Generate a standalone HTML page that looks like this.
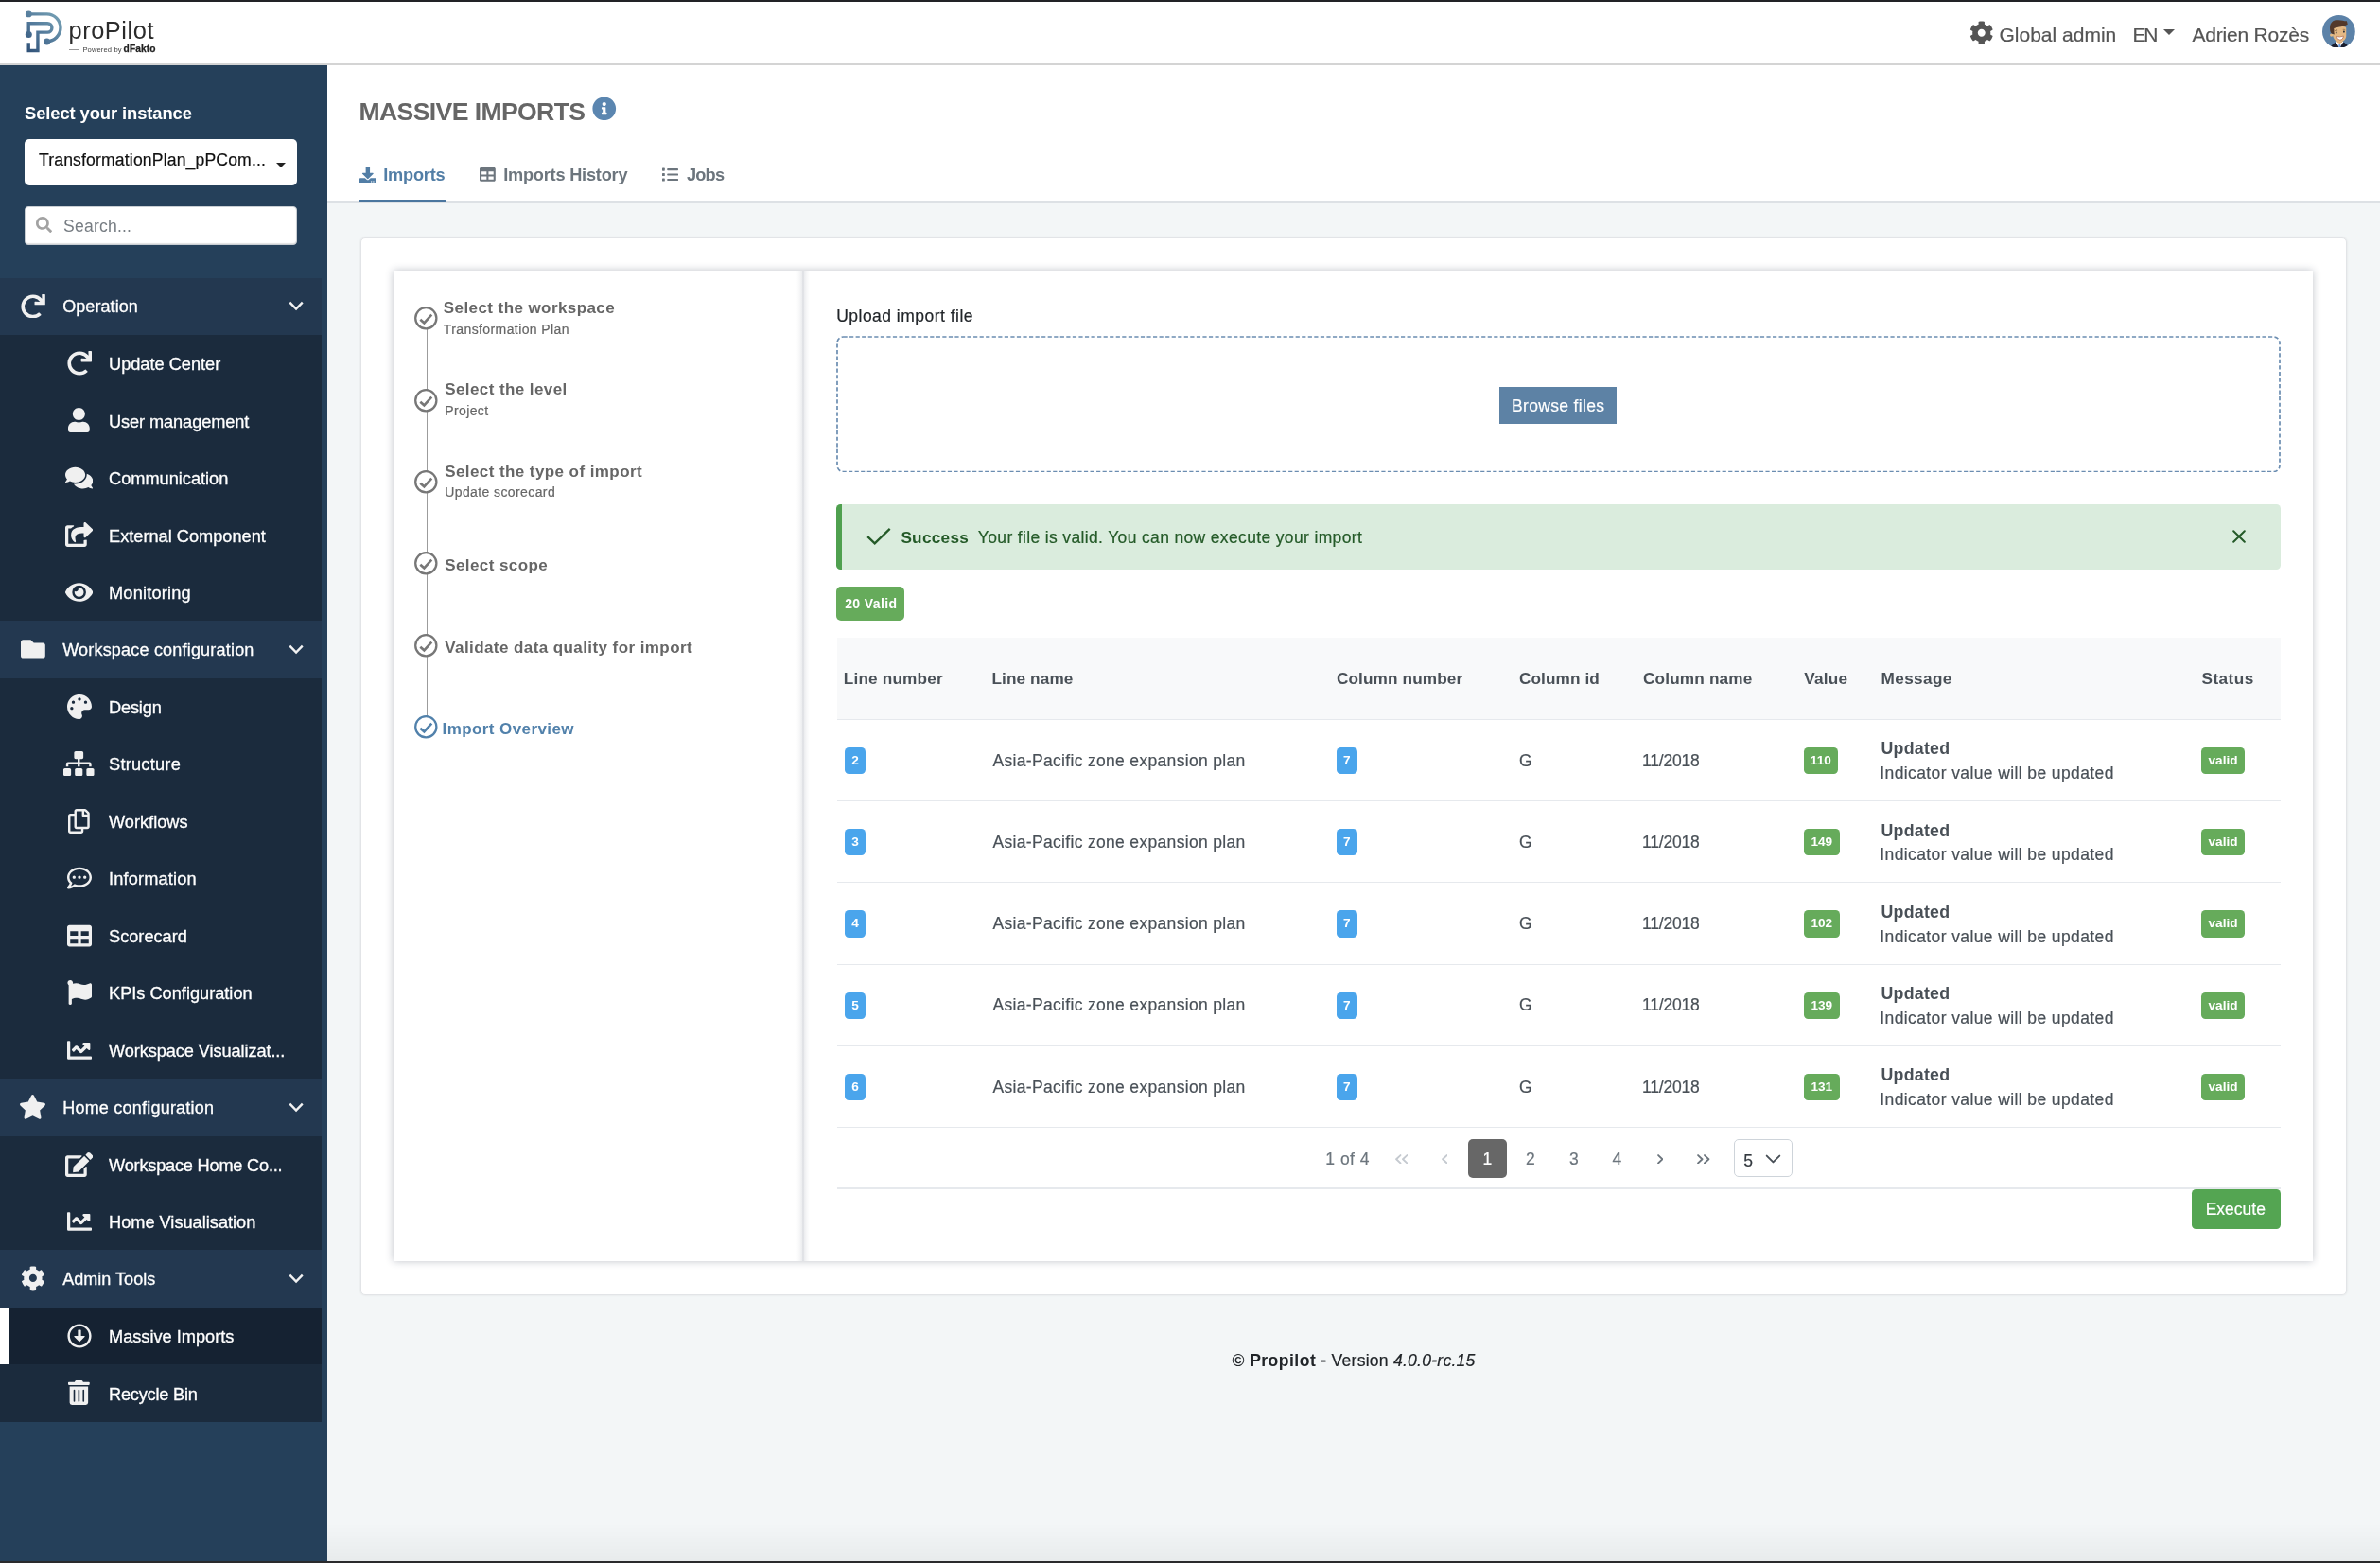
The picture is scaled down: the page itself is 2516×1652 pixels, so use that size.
<!DOCTYPE html>
<html lang="en">
<head>
<meta charset="utf-8">
<title>proPilot - Massive Imports</title>
<style>
*{box-sizing:border-box;margin:0;padding:0}
html,body{width:2516px;height:1652px;overflow:hidden}
body{position:relative;background:#f3f6f7;font-family:"Liberation Sans",sans-serif;color:#495057;font-size:18px}
svg{display:block}
#wrap{position:absolute;left:0;top:0;width:2516px;height:1652px;will-change:transform}
.abs{position:absolute}
.t{position:absolute;white-space:nowrap;line-height:1}
/* top */
#topbar{position:absolute;left:0;top:0;width:2516px;height:2px;background:#222326}
#header{position:absolute;left:0;top:2px;width:2516px;height:67px;background:#fff;border-bottom:2px solid #d4d4d4}

/* header content */
#logo{position:absolute;left:20px;top:4px;width:60px;height:60px}
#brand{position:absolute;left:72.5px;top:20px;font-size:25.4px;line-height:1;color:#2b2b2b;letter-spacing:.55px;white-space:nowrap}
#pwline{position:absolute;left:73px;top:51.8px;width:10px;height:1px;background:#999}
#pw{position:absolute;left:87.4px;top:48.7px;font-size:7.6px;line-height:1;color:#444;white-space:nowrap;letter-spacing:.12px}
#df{position:absolute;left:130.6px;top:47.2px;-webkit-text-stroke:.25px #222;font-size:10.2px;line-height:1;color:#222;font-weight:700;white-space:nowrap;letter-spacing:.1px}
.hr{position:absolute;top:25.7px;font-size:21px;line-height:1;color:#555;white-space:nowrap}
#gear{position:absolute;left:2082px;top:22px;width:25.5px;height:25.5px}
#gear svg{width:100%;height:100%;fill:#555}
#encaret{position:absolute;left:2286.5px;top:31px;width:0;height:0;border-left:6.5px solid transparent;border-right:6.5px solid transparent;border-top:6.5px solid #555}
#avatar{position:absolute;left:2455px;top:15.5px;width:34.8px;height:34.8px}
/* sidebar */
#sidebar{position:absolute;left:0;top:69px;width:346px;height:1583px;background:#25405a}
#nav{position:absolute;left:0;top:224.5px;width:340px}
.grp{position:relative;height:60.48px;background:#233850}
.itm{position:relative;height:60.48px;background:#1b2b3d}
.itm.act{background:#152232}
.itm.act:before{content:"";position:absolute;left:0;top:0;width:9px;height:100%;background:#fff}
.grp .lbl{-webkit-text-stroke:.3px #fff;position:absolute;left:66.2px;top:21.9px;font-size:18px;line-height:1;color:#fff;white-space:nowrap;letter-spacing:.07px}
.itm .lbl{-webkit-text-stroke:.3px #fff;position:absolute;left:115px;top:22.2px;font-size:18.2px;line-height:1;color:#fff;white-space:nowrap}
.grp .ic{position:absolute;left:14.9px;top:17px;width:40px;height:25.8px;display:flex;justify-content:center}
.itm .ic{position:absolute;left:63.7px;top:17px;width:40px;height:26px;display:flex;justify-content:center}
.grp .chev{position:absolute;left:304.5px;top:24.5px;width:16px;height:12px}
.ic svg{height:100%;width:auto;fill:#f0f0f0}
.chev svg{width:100%;height:100%}
#selinst{position:absolute;left:26px;top:41.5px;font-size:18.4px;font-weight:700;color:#fff;line-height:1;white-space:nowrap;letter-spacing:-.1px}
#dd{position:absolute;left:26px;top:78px;width:288px;height:48.500px;background:#fff;border-radius:5px}
#dd .tx{position:absolute;left:15px;top:13.700px;font-size:17.6px;line-height:1;color:#111;white-space:nowrap;letter-spacing:.15px}
#dd .car{position:absolute;left:265.500px;top:25px;width:0;height:0;border-left:5.500px solid transparent;border-right:5.500px solid transparent;border-top:5.500px solid #222}
#srch{position:absolute;left:26px;top:149px;width:288px;height:41px;background:#fff;border-radius:4px;border:1px solid #c9ced3;box-shadow:inset 0 -1px 1px rgba(0,0,0,.12)}
#srch .tx{position:absolute;left:40px;top:11.500px;font-size:17.6px;line-height:1;color:#777d83;white-space:nowrap;letter-spacing:.2px}
#srch svg{position:absolute;left:10.500px;top:9.700px;width:17px;height:17px;fill:#a2a2a2}
/* main */
#whitehead{position:absolute;left:346px;top:69px;width:2170px;height:143px;background:#fff}
#tabline{position:absolute;left:346px;top:212.100px;width:2170px;height:2.700px;background:#dde1e5}
#tabactive{position:absolute;left:380.200px;top:211px;width:91.800px;height:2.600px;background:#4b769f}
#card1{position:absolute;left:380.600px;top:250.700px;width:2100px;height:1118px;background:#fff;border:1px solid #e2e4e7;border-radius:5px;box-shadow:0 0 2.500px rgba(0,0,0,.09)}
#card2{position:absolute;left:415.600px;top:285.900px;width:2029.500px;height:1047.100px;background:#fff;box-shadow:0 0 8px rgba(45,55,80,.3)}
#steps{position:absolute;left:842.300px;top:285.900px;width:14px;height:1047.100px;background:linear-gradient(to right,rgba(55,65,90,0),rgba(55,65,90,.04) 22%,rgba(55,65,90,.09) 40%,rgba(55,65,90,.11) 46.300%,rgba(55,65,90,.27) 46.800%,rgba(55,65,90,.27) 53.200%,rgba(55,65,90,.11) 53.700%,rgba(55,65,90,.09) 60%,rgba(55,65,90,.04) 78%,rgba(55,65,90,0))}

#title{position:absolute;left:379.5px;top:104.700px;font-size:26.600px;font-weight:700;color:#666;line-height:1;white-space:nowrap;letter-spacing:-.62px}
#info{position:absolute;left:626px;top:101.500px;width:25.500px;height:25.500px}
#info svg{width:100%;height:100%;fill:#5b86b0}
.tab{position:absolute;top:176px;font-size:18.200px;font-weight:700;line-height:1;white-space:nowrap;color:#6c757d}
.tabic{position:absolute}
.tabic svg{width:100%;height:100%}
/* stepper */
.stc{position:absolute;left:438.200px;width:24.600px;height:24.600px}
.stt{position:absolute;font-size:17px;font-weight:700;color:#666;line-height:1;white-space:nowrap;letter-spacing:.42px}
.sts{position:absolute;font-size:14px;color:#666;line-height:1;white-space:nowrap;letter-spacing:.4px}
#stline{position:absolute;left:450.600px;top:348px;width:1.600px;height:409px;background:#9c9c9c}
/* right pane */
#upl{position:absolute;left:884.2px;top:325.5px;font-size:17.5px;color:#212529;line-height:1;white-space:nowrap;letter-spacing:.48px}
#drop{position:absolute;left:884px;top:354.8px;width:1527px;height:144.5px}
#browse{position:absolute;left:1585.3px;top:408.9px;width:123.7px;height:38.7px;background:#5d82a5}
#alert{position:absolute;left:884px;top:533.2px;width:1526.6px;height:69.3px;background:#daecdd;border-left:6px solid #4fa04f;border-radius:4.5px}
#alert .ck{position:absolute;left:25.3px;top:24.3px;width:28px;height:20px}
#alert .b{position:absolute;left:62.4px;top:26.9px;font-size:17.2px;font-weight:700;color:#245a28;line-height:1;letter-spacing:.27px}
#alert .m{position:absolute;left:143.8px;top:26.6px;font-size:17.5px;color:#245a28;line-height:1;white-space:nowrap;letter-spacing:.35px}
#alert .x{position:absolute;left:1470.200px;top:27.200px;width:14px;height:14px}
.bdg{position:absolute;border-radius:4px;color:#fff;font-weight:700;font-size:13.200px;text-align:center;line-height:1}
#valid20{left:884px;top:619.8px;width:72.2px;height:36.7px;background:#66ab5b;border-radius:5px}
#thead{position:absolute;left:884.5px;top:674.3px;width:1526px;height:86.4px;background:#f8f9fa;border-bottom:1.8px solid #e6e9ed}
.th{position:absolute;top:708.7px;font-size:17.2px;font-weight:700;color:#495057;line-height:1;white-space:nowrap}
.row{position:absolute;left:884.5px;width:1526px;height:86.4px;border-bottom:1.8px solid #e6e9ed}
.row .c{position:absolute;top:34.9px;font-size:17.5px;color:#495057;line-height:1;white-space:nowrap}
.row .bb{position:absolute;top:29.1px;height:28.2px;border-radius:4.5px;color:#fff;font-weight:700;font-size:13.6px;line-height:28.4px;text-align:center}
.blue{background:#4aa5ec}.green{background:#66ab5b}

#pagline{position:absolute;left:884.500px;top:1255.200px;width:1526px;height:1.800px;background:#e6e9ed}
.pg{position:absolute;top:1216.6px;font-size:17.5px;line-height:1;color:#6c757d;white-space:nowrap}
#pg1{position:absolute;left:1552.100px;top:1203.500px;width:40.700px;height:41.100px;background:#676767;border-radius:5px}
.pgi{position:absolute;top:1219.5px;height:10.5px}
#pgsel{position:absolute;left:1832.900px;top:1204.200px;width:61.800px;height:39.800px;border:1.300px solid #ced4da;border-radius:5px;background:#fff}
#pgsel span{position:absolute;left:9.300px;top:13.8px;font-size:17.500px;line-height:1;color:#343a40}
#pgsel svg{position:absolute;left:31.800px;top:14.600px;width:17px;height:10.500px}
#exec{position:absolute;left:2316.900px;top:1256.900px;width:94px;height:41.900px;background:#54a552;border-radius:4.500px}
#foot{position:absolute;left:346px;width:2170px;top:1430.300px;text-align:center;font-size:17.600px;line-height:1;color:#212529;white-space:nowrap;letter-spacing:.23px}
#botline{position:absolute;left:0;top:1650px;width:2516px;height:2px;background:#2a2a2c}
#botshade{position:absolute;left:346px;top:1610px;width:2170px;height:40px;background:linear-gradient(to bottom,rgba(0,0,0,0),rgba(0,0,0,.045))}

.row .c,#upl,#alert .m,.pg,.hr,#dd .tx,.sts,#foot,#browse .t,#exec .t,#pg1 .t,#pgsel span{-webkit-text-stroke-width:.2px}
.row .c[style*="font-weight:700"],#foot b{-webkit-text-stroke-width:0}
</style>
</head>
<body>
<div id="wrap">
<div id="topbar"></div>
<div id="header"></div>
<svg id="logo" viewBox="0 0 60 60">
<defs><linearGradient id="lg" gradientUnits="userSpaceOnUse" x1="8" y1="54" x2="46" y2="14"><stop offset="0" stop-color="#2b4c73"/><stop offset=".5" stop-color="#52799a"/><stop offset="1" stop-color="#76a1b5"/></linearGradient></defs>
<g fill="none" stroke="url(#lg)" stroke-width="3.4">
<path d="M10.3 10.9H29.5A14.4 14.4 0 0 1 29.6 39.8"/>
<path d="M10.2 32.6V20.7H30.2A4.7 4.7 0 0 1 30.2 30.1H19.95V49.5H10.2V41.3"/>
</g>
<g fill="url(#lg)"><circle cx="10.3" cy="10.9" r="3.4"/><circle cx="10.3" cy="32.6" r="3.5"/><circle cx="29.6" cy="39.9" r="3.5"/></g>
</svg>
<div id="brand">proPilot</div>
<div id="pwline"></div><div id="pw">Powered by</div><div id="df">dFakto</div>
<div id="gear"><svg viewBox="0 0 512 512"><path d="M487.4 315.7l-42.6-24.6c4.3-23.2 4.3-47 0-70.2l42.6-24.6c4.9-2.8 7.1-8.6 5.5-14-11.1-35.6-30-67.8-54.7-94.6-3.8-4.1-10-5.1-14.8-2.3L380.8 110c-17.9-15.400-38.500-27.300-60.800-35.100V25.800c0-5.600-3.900-10.500-9.400-11.700-36.700-8.200-74.300-7.800-109.200 0-5.500 1.200-9.400 6.100-9.400 11.700V75c-22.200 7.900-42.800 19.800-60.800 35.100L88.700 85.500c-4.900-2.800-11-1.900-14.800 2.300-24.700 26.700-43.600 58.900-54.700 94.600-1.700 5.400.6 11.200 5.500 14L67.300 221c-4.300 23.200-4.300 47 0 70.200l-42.600 24.600c-4.900 2.800-7.100 8.600-5.500 14 11.100 35.600 30 67.800 54.700 94.600 3.800 4.100 10 5.100 14.800 2.300l42.600-24.600c17.900 15.400 38.500 27.300 60.800 35.100v49.200c0 5.600 3.900 10.500 9.400 11.700 36.700 8.200 74.300 7.800 109.200 0 5.500-1.200 9.400-6.100 9.400-11.700v-49.200c22.200-7.900 42.800-19.800 60.800-35.100l42.600 24.600c4.900 2.800 11 1.900 14.800-2.300 24.700-26.700 43.600-58.900 54.700-94.600 1.500-5.500-.7-11.300-5.600-14.100zM256 336c-44.100 0-80-35.900-80-80s35.900-80 80-80 80 35.900 80 80-35.900 80-80 80z"/></svg></div>
<div class="hr" style="left:2113.5px">Global admin</div>
<div class="hr" style="left:2254.5px;letter-spacing:-2.2px">EN</div>
<div id="encaret"></div>
<div class="hr" style="left:2317.5px;letter-spacing:-.22px">Adrien Rozès</div>
<svg id="avatar" viewBox="0 0 104 104">
<defs><clipPath id="avc"><circle cx="52" cy="52" r="52"/></clipPath></defs>
<circle cx="52" cy="52" r="52" fill="#5c82a8"/>
<g clip-path="url(#avc)">
<path d="M28 97L41 86L54 89L68 85L79 95L84 110H24Z" fill="#1b1e2d"/>
<path d="M41.500 84L54.500 104L67 84Z" fill="#fff"/>
<path d="M52 93H57.500L58 106H51.500Z" fill="#6a9de0"/>
<path d="M47 76H63V86L55 90L47 86Z" fill="#dca874"/>
<circle cx="29" cy="63" r="5" fill="#e3b782"/>
<path d="M33 42C33 36 74 32 75.500 40V66C75 78 63 86 55 86C45 86 35 76 33.500 64Z" fill="#e4b884"/>
<path d="M24 40C24 22 36 14.500 48 15.500C58 14.500 70 19 77.500 18.500L80 29.500C70 36 50 38 36.500 42C38 48 36 54 38.500 61L31 59C26 56 24 50 24 40Z" fill="#53382a"/>
<ellipse cx="44" cy="55.500" rx="2.600" ry="3.300" fill="#15202e"/>
<ellipse cx="68.500" cy="52.500" rx="2.600" ry="3.300" fill="#15202e"/>
<path d="M40 49.500Q44 46.500 48 48" stroke="#3a2519" stroke-width="1.800" fill="none"/>
<path d="M65 46Q69 44.500 72.500 47" stroke="#7a5a3a" stroke-width="1.800" fill="none"/>
<path d="M44.500 67.500Q55 71 67 66Q65 78 56 78Q48 78 44.500 67.500Z" fill="#fff" stroke="#9c4a34" stroke-width="1.600"/>
</g>
</svg>
<div id="sidebar">
<div id="selinst">Select your instance</div>
<div id="dd"><span class="tx">TransformationPlan_pPCom...</span><span class="car"></span></div>
<div id="srch"><svg viewBox="0 0 512 512"><path d="M505 442.700L405.300 343c-4.500-4.500-10.600-7-17-7H372c27.600-35.300 44-79.700 44-128C416 93.100 322.900 0 208 0S0 93.100 0 208s93.100 208 208 208c48.300 0 92.700-16.400 128-44v16.300c0 6.400 2.500 12.500 7 17l99.700 99.700c9.400 9.400 24.600 9.400 33.900 0l28.300-28.300c9.400-9.400 9.400-24.600.100-34zM208 336c-70.700 0-128-57.200-128-128 0-70.700 57.200-128 128-128 70.700 0 128 57.200 128 128 0 70.700-57.200 128-128 128z"/></svg><span class="tx">Search...</span></div>
<div id="nav">
<div class="grp"><span class="ic"><svg viewBox="0 0 512 512"><path d="M500.33 0h-47.41a12 12 0 0 0-12 12.57l4 82.76A247.42 247.42 0 0 0 256 8C119.34 8 7.9 119.53 8 256.19 8.1 393.07 119.1 504 256 504a247.1 247.1 0 0 0 166.18-63.91 12 12 0 0 0 .48-17.43l-34-34a12 12 0 0 0-16.38-.55A176 176 0 1 1 402.1 157.8l-101.53-4.87a12 12 0 0 0-12.57 12v47.41a12 12 0 0 0 12 12h200.33a12 12 0 0 0 12-12V12a12 12 0 0 0-12-12z"/></svg></span><span class="lbl">Operation</span><span class="chev"><svg viewBox="0 0 16 12"><path d="M1.350 1.550L8.050 8.600L14.750 1.550" fill="none" stroke="#f2f2f2" stroke-width="2.400"/></svg></span></div>
<div class="itm"><span class="ic"><svg viewBox="0 0 512 512"><path d="M500.33 0h-47.41a12 12 0 0 0-12 12.57l4 82.76A247.42 247.42 0 0 0 256 8C119.34 8 7.9 119.53 8 256.19 8.1 393.07 119.1 504 256 504a247.1 247.1 0 0 0 166.18-63.91 12 12 0 0 0 .48-17.43l-34-34a12 12 0 0 0-16.38-.55A176 176 0 1 1 402.1 157.8l-101.53-4.87a12 12 0 0 0-12.57 12v47.41a12 12 0 0 0 12 12h200.33a12 12 0 0 0 12-12V12a12 12 0 0 0-12-12z"/></svg></span><span class="lbl">Update Center</span></div>
<div class="itm"><span class="ic"><svg viewBox="0 0 448 512"><path d="M224 256c70.7 0 128-57.3 128-128S294.7 0 224 0 96 57.3 96 128s57.3 128 128 128zm89.6 32h-16.7c-22.2 10.2-46.9 16-72.9 16s-50.6-5.8-72.9-16h-16.7C60.2 288 0 348.2 0 422.4V464c0 26.5 21.5 48 48 48h352c26.5 0 48-21.5 48-48v-41.6c0-74.2-60.2-134.4-134.4-134.4z"/></svg></span><span class="lbl" style="letter-spacing:-0.09px">User management</span></div>
<div class="itm"><span class="ic"><svg viewBox="0 0 576 512"><path d="M416 192c0-88.4-93.1-160-208-160S0 103.6 0 192c0 34.3 14.1 65.9 38 92-13.4 30.2-35.5 54.2-35.8 54.5-2.2 2.3-2.8 5.7-1.5 8.700S4.800 352 8 352c36.600 0 66.900-12.300 88.700-25 32.200 15.700 70.300 25 111.300 25 114.900 0 208-71.600 208-160zm122 220c23.900-26 38-57.700 38-92 0-66.900-53.500-124.200-129.300-148.100.900 6.600 1.300 13.300 1.300 20.100 0 105.900-107.700 192-240 192-10.800 0-21.300-.800-31.700-1.900C207.800 439.600 281.800 480 368 480c41 0 79.100-9.200 111.300-25 21.800 12.700 52.100 25 88.700 25 3.200 0 6.100-1.900 7.300-4.800 1.300-2.900.700-6.300-1.500-8.700-.300-.300-22.400-24.200-35.800-54.500z"/></svg></span><span class="lbl">Communication</span></div>
<div class="itm"><span class="ic"><svg viewBox="0 0 576 512"><path d="M568.482 177.448L424.479 313.433C409.3 327.768 384 317.14 384 295.985v-71.963c-144.575.97-205.566 35.113-164.775 171.353 4.483 14.973-12.846 26.567-25.006 17.33C155.252 383.105 120 326.488 120 269.339c0-143.937 117.599-172.5 264-173.312V24.012c0-21.174 25.317-31.768 40.479-17.448l144.003 135.988c10.02 9.463 10.028 25.425 0 34.896zM384 379.128V448H64V128h50.916a11.990 11.990 0 0 0 8.648-3.693c14.953-15.568 32.237-27.890 51.014-37.676C185.708 80.830 181.584 64 169.033 64H48C21.490 64 0 85.490 0 112v352c0 26.510 21.490 48 48 48h352c26.510 0 48-21.490 48-48v-88.806c0-8.288-8.197-14.066-16.011-11.302a71.830 71.830 0 0 1-34.189 3.377c-7.270-1.046-13.800 4.514-13.800 11.859z"/></svg></span><span class="lbl">External Component</span></div>
<div class="itm"><span class="ic"><svg viewBox="0 0 576 512"><path d="M572.52 241.4C518.29 135.59 410.93 64 288 64S57.68 135.64 3.48 241.41a32.35 32.35 0 0 0 0 29.19C57.71 376.41 165.07 448 288 448s230.32-71.64 284.52-177.41a32.35 32.35 0 0 0 0-29.19zM288 400a144 144 0 1 1 144-144 143.93 143.93 0 0 1-144 144zm0-240a95.31 95.31 0 0 0-25.31 3.79 47.85 47.85 0 0 1-66.9 66.9A95.78 95.78 0 1 0 288 160z"/></svg></span><span class="lbl" style="letter-spacing:0.2px">Monitoring</span></div>
<div class="grp"><span class="ic"><svg viewBox="0 0 512 512"><path d="M464 128H272l-64-64H48C21.49 64 0 85.49 0 112v288c0 26.51 21.49 48 48 48h416c26.51 0 48-21.49 48-48V176c0-26.51-21.49-48-48-48z"/></svg></span><span class="lbl" style="letter-spacing:.2px">Workspace configuration</span><span class="chev"><svg viewBox="0 0 16 12"><path d="M1.350 1.550L8.050 8.600L14.750 1.550" fill="none" stroke="#f2f2f2" stroke-width="2.400"/></svg></span></div>
<div class="itm"><span class="ic"><svg viewBox="0 0 512 512"><path d="M204.3 5C104.9 24.4 24.8 104.3 5.2 203.4c-37 187 131.7 326.4 258.8 306.7 41.2-6.4 61.4-54.6 42.5-91.7-23.1-45.4 9.9-98.4 60.9-98.4h79.7c35.8 0 64.8-29.6 64.9-65.3C511.5 97.1 368.1-26.9 204.3 5zM96 320c-17.7 0-32-14.3-32-32s14.3-32 32-32 32 14.3 32 32-14.3 32-32 32zm32-128c-17.7 0-32-14.3-32-32s14.3-32 32-32 32 14.3 32 32-14.3 32-32 32zm128-64c-17.7 0-32-14.3-32-32s14.3-32 32-32 32 14.3 32 32-14.3 32-32 32zm128 64c-17.7 0-32-14.3-32-32s14.3-32 32-32 32 14.3 32 32-14.3 32-32 32z"/></svg></span><span class="lbl" style="letter-spacing:-0.17px">Design</span></div>
<div class="itm"><span class="ic"><svg viewBox="0 0 640 512"><path d="M128 352H32c-17.67 0-32 14.33-32 32v96c0 17.67 14.33 32 32 32h96c17.67 0 32-14.33 32-32v-96c0-17.67-14.33-32-32-32zm-24-80h192v48h48v-48h192v48h48v-57.59c0-21.17-17.23-38.41-38.41-38.41H344v-64h40c17.67 0 32-14.33 32-32V32c0-17.67-14.33-32-32-32H256c-17.67 0-32 14.33-32 32v96c0 17.67 14.33 32 32 32h40v64H94.41C73.23 224 56 241.23 56 262.41V320h48v-48zm264 80h-96c-17.67 0-32 14.33-32 32v96c0 17.67 14.33 32 32 32h96c17.67 0 32-14.33 32-32v-96c0-17.67-14.33-32-32-32zm240 0h-96c-17.67 0-32 14.33-32 32v96c0 17.67 14.33 32 32 32h96c17.67 0 32-14.33 32-32v-96c0-17.67-14.33-32-32-32z"/></svg></span><span class="lbl" style="letter-spacing:0.25px">Structure</span></div>
<div class="itm"><span class="ic"><svg viewBox="0 0 448 512"><path d="M433.941 65.941l-51.882-51.882A48 48 0 0 0 348.118 0H176c-26.51 0-48 21.49-48 48v48H48c-26.51 0-48 21.49-48 48v320c0 26.51 21.49 48 48 48h224c26.51 0 48-21.49 48-48v-48h80c26.51 0 48-21.49 48-48V99.882a48 48 0 0 0-14.059-33.941zM266 464H54a6 6 0 0 1-6-6V150a6 6 0 0 1 6-6h74v224c0 26.51 21.49 48 48 48h96v42a6 6 0 0 1-6 6zm128-96H182a6 6 0 0 1-6-6V54a6 6 0 0 1 6-6h106v88c0 13.255 10.745 24 24 24h88v202a6 6 0 0 1-6 6zm6-256h-64V48h9.632c1.591 0 3.117.632 4.243 1.757l48.368 48.368a6 6 0 0 1 1.757 4.243V112z"/></svg></span><span class="lbl">Workflows</span></div>
<div class="itm"><span class="ic"><svg viewBox="0 0 512 512"><path d="M144 208c-17.7 0-32 14.3-32 32s14.3 32 32 32 32-14.3 32-32-14.3-32-32-32zm112 0c-17.7 0-32 14.3-32 32s14.3 32 32 32 32-14.3 32-32-14.3-32-32-32zm112 0c-17.7 0-32 14.3-32 32s14.3 32 32 32 32-14.3 32-32-14.3-32-32-32zM256 32C114.6 32 0 125.1 0 240c0 47.6 19.9 91.2 52.9 126.3C38 405.7 7 439.1 6.5 439.5c-6.6 7-8.4 17.2-4.6 26S14.4 480 24 480c61.5 0 110-25.7 139.1-46.3C192 442.8 223.2 448 256 448c141.4 0 256-93.1 256-208S397.4 32 256 32zm0 368c-26.7 0-53.1-4.1-78.4-12.1l-22.7-7.2-19.5 13.8c-14.3 10.1-33.9 21.4-57.5 29 7.3-12.1 14.4-25.7 19.9-40.2l10.6-28.1-20.6-21.8C69.7 314.1 48 282.2 48 240c0-88.2 93.3-160 208-160s208 71.8 208 160-93.300 160-208 160z"/></svg></span><span class="lbl" style="letter-spacing:0.17px">Information</span></div>
<div class="itm"><span class="ic"><svg viewBox="0 0 512 512"><path d="M464 32H48C21.49 32 0 53.49 0 80v352c0 26.51 21.49 48 48 48h416c26.51 0 48-21.49 48-48V80c0-26.51-21.49-48-48-48zM224 416H64v-96h160v96zm0-160H64v-96h160v96zm224 160H288v-96h160v96zm0-160H288v-96h160v96z"/></svg></span><span class="lbl">Scorecard</span></div>
<div class="itm"><span class="ic"><svg viewBox="0 0 512 512"><path d="M349.565 98.783C295.978 98.783 251.721 64 184.348 64c-24.955 0-47.309 4.384-68.045 12.013a55.947 55.947 0 0 0 3.586-23.562C118.117 24.015 94.806 1.206 66.338.048 34.345-1.254 8 24.296 8 56c0 19.026 9.497 35.825 24 45.945V488c0 13.255 10.745 24 24 24h16c13.255 0 24-10.745 24-24v-94.4c28.311-12.064 63.582-22.122 114.435-22.122 53.588 0 97.844 34.783 165.217 34.783 48.169 0 86.667-16.294 122.505-40.858C506.84 359.452 512 349.571 512 339.045v-243.1c0-23.393-24.269-38.87-45.485-29.016-34.338 15.948-76.454 31.854-116.95 31.854z"/></svg></span><span class="lbl">KPIs Configuration</span></div>
<div class="itm"><span class="ic"><svg viewBox="0 0 512 512"><path d="M496 384H64V80c0-8.84-7.16-16-16-16H16C7.16 64 0 71.16 0 80v336c0 17.67 14.33 32 32 32h464c8.84 0 16-7.16 16-16v-32c0-8.84-7.16-16-16-16zM464 96H345.94c-21.38 0-32.09 25.85-16.97 40.97l32.4 32.4L288 242.75l-73.37-73.37c-12.5-12.5-32.76-12.5-45.25 0l-68.69 68.69c-6.25 6.25-6.25 16.38 0 22.63l22.62 22.62c6.25 6.25 16.38 6.25 22.63 0L192 237.25l73.37 73.37c12.5 12.5 32.76 12.5 45.25 0l96-96 32.4 32.4c15.12 15.12 40.97 4.41 40.97-16.97V112c.01-8.84-7.15-16-15.99-16z"/></svg></span><span class="lbl" style="letter-spacing:-0.09px">Workspace Visualizat...</span></div>
<div class="grp"><span class="ic"><svg viewBox="0 0 576 512"><path d="M259.3 17.8L194 150.2 47.9 171.5c-26.2 3.8-36.7 36.1-17.7 54.6l105.7 103-25 145.5c-4.5 26.3 23.2 46 46.4 33.7L288 439.6l130.7 68.7c23.2 12.2 50.9-7.4 46.4-33.7l-25-145.5 105.7-103c19-18.5 8.5-50.8-17.7-54.6L382 150.2 316.7 17.8c-11.7-23.6-45.6-23.9-57.4 0z"/></svg></span><span class="lbl" style="letter-spacing:.22px">Home configuration</span><span class="chev"><svg viewBox="0 0 16 12"><path d="M1.350 1.550L8.050 8.600L14.750 1.550" fill="none" stroke="#f2f2f2" stroke-width="2.400"/></svg></span></div>
<div class="itm"><span class="ic"><svg viewBox="0 0 576 512"><path d="M402.6 83.2l90.2 90.2c3.8 3.8 3.8 10 0 13.8L274.4 405.6l-92.8 10.3c-12.4 1.4-22.9-9.1-21.5-21.5l10.3-92.8L388.8 83.2c3.8-3.8 10-3.8 13.8 0zm162-22.9l-48.8-48.8c-15.2-15.2-39.9-15.2-55.2 0l-35.4 35.4c-3.8 3.8-3.8 10 0 13.8l90.2 90.2c3.8 3.8 10 3.8 13.8 0l35.4-35.4c15.2-15.3 15.2-40 0-55.2zM384 346.2V448H64V128h229.8c3.2 0 6.2-1.3 8.5-3.5l40-40c7.6-7.6 2.2-20.5-8.5-20.5H48C21.5 64 0 85.5 0 112v352c0 26.5 21.5 48 48 48h352c26.5 0 48-21.5 48-48V306.2c0-10.7-12.9-16-20.5-8.5l-40 40c-2.200 2.300-3.500 5.300-3.500 8.500z"/></svg></span><span class="lbl" style="letter-spacing:-0.21px">Workspace Home Co...</span></div>
<div class="itm"><span class="ic"><svg viewBox="0 0 512 512"><path d="M496 384H64V80c0-8.84-7.16-16-16-16H16C7.16 64 0 71.16 0 80v336c0 17.67 14.33 32 32 32h464c8.84 0 16-7.16 16-16v-32c0-8.84-7.16-16-16-16zM464 96H345.94c-21.38 0-32.09 25.85-16.97 40.97l32.4 32.4L288 242.75l-73.37-73.37c-12.5-12.5-32.76-12.5-45.25 0l-68.69 68.69c-6.25 6.25-6.25 16.38 0 22.63l22.62 22.62c6.25 6.25 16.38 6.25 22.63 0L192 237.25l73.37 73.37c12.5 12.5 32.76 12.5 45.25 0l96-96 32.4 32.4c15.12 15.12 40.97 4.41 40.97-16.97V112c.01-8.84-7.15-16-15.99-16z"/></svg></span><span class="lbl">Home Visualisation</span></div>
<div class="grp"><span class="ic"><svg viewBox="0 0 512 512"><path d="M487.4 315.7l-42.6-24.6c4.3-23.2 4.3-47 0-70.2l42.6-24.6c4.9-2.8 7.1-8.6 5.5-14-11.1-35.6-30-67.8-54.7-94.6-3.8-4.1-10-5.1-14.8-2.3L380.8 110c-17.9-15.4-38.5-27.3-60.8-35.1V25.8c0-5.6-3.9-10.5-9.4-11.7-36.7-8.2-74.3-7.8-109.2 0-5.5 1.2-9.4 6.1-9.4 11.7V75c-22.2 7.9-42.8 19.8-60.8 35.1L88.7 85.5c-4.9-2.8-11-1.9-14.8 2.3-24.7 26.7-43.6 58.9-54.7 94.6-1.7 5.4.6 11.2 5.5 14L67.3 221c-4.3 23.2-4.3 47 0 70.2l-42.6 24.6c-4.9 2.8-7.1 8.6-5.5 14 11.1 35.6 30 67.8 54.7 94.6 3.8 4.1 10 5.1 14.8 2.3l42.6-24.6c17.9 15.4 38.5 27.3 60.8 35.1v49.2c0 5.6 3.9 10.5 9.4 11.7 36.7 8.2 74.3 7.8 109.2 0 5.5-1.2 9.4-6.1 9.4-11.7v-49.2c22.2-7.9 42.8-19.8 60.8-35.1l42.6 24.6c4.9 2.8 11 1.9 14.8-2.3 24.7-26.7 43.6-58.9 54.7-94.6 1.5-5.5-.7-11.3-5.6-14.1zM256 336c-44.1 0-80-35.9-80-80s35.9-80 80-80 80 35.900 80 80-35.900 80-80 80z"/></svg></span><span class="lbl" style="letter-spacing:.03px">Admin Tools</span><span class="chev"><svg viewBox="0 0 16 12"><path d="M1.350 1.550L8.050 8.600L14.750 1.550" fill="none" stroke="#f2f2f2" stroke-width="2.400"/></svg></span></div>
<div class="itm act"><span class="ic"><svg viewBox="0 0 512 512"><path d="M256 8C119 8 8 119 8 256s111 248 248 248 248-111 248-248S393 8 256 8zm0 448c-110.5 0-200-89.5-200-200S145.5 56 256 56s200 89.5 200 200-89.5 200-200 200zm-32-316v116h-67c-10.7 0-16 12.9-8.5 20.5l99 99c4.7 4.7 12.300 4.700 17 0l99-99c7.600-7.600 2.200-20.500-8.500-20.500h-67V140c0-6.600-5.400-12-12-12h-40c-6.600 0-12 5.400-12 12z"/></svg></span><span class="lbl">Massive Imports</span></div>
<div class="itm"><span class="ic"><svg viewBox="0 0 448 512"><path d="M32 464a48 48 0 0 0 48 48h288a48 48 0 0 0 48-48V128H32zm272-256a16 16 0 0 1 32 0v224a16 16 0 0 1-32 0zm-96 0a16 16 0 0 1 32 0v224a16 16 0 0 1-32 0zm-96 0a16 16 0 0 1 32 0v224a16 16 0 0 1-32 0zM432 32H312l-9.4-18.7A24 24 0 0 0 281.1 0H166.8a23.72 23.72 0 0 0-21.4 13.3L136 32H16A16 16 0 0 0 0 48v32a16 16 0 0 0 16 16h416a16 16 0 0 0 16-16V48a16 16 0 0 0-16-16z"/></svg></span><span class="lbl" style="letter-spacing:-0.22px">Recycle Bin</span></div>
</div>
</div>
<div id="whitehead"></div>
<div id="tabline"></div>
<div id="tabactive"></div>
<div id="title">MASSIVE IMPORTS</div>
<div id="info"><svg viewBox="0 0 512 512"><path d="M256 8C119.043 8 8 119.083 8 256c0 136.997 111.043 248 248 248s248-111.003 248-248C504 119.083 392.957 8 256 8zm0 110c23.196 0 42 18.804 42 42s-18.804 42-42 42-42-18.804-42-42 18.804-42 42-42zm56 254c0 6.627-5.373 12-12 12h-88c-6.627 0-12-5.373-12-12v-24c0-6.627 5.373-12 12-12h12v-64h-12c-6.627 0-12-5.373-12-12v-24c0-6.627 5.373-12 12-12h64c6.627 0 12 5.373 12 12v100h12c6.627 0 12 5.373 12 12v24z"/></svg></div>
<div class="tabic" style="left:380px;top:175.600px;width:17.700px;height:17.700px"><svg viewBox="0 0 512 512" fill="#527ea6"><path d="M216 0h80c13.3 0 24 10.7 24 24v168h87.7c17.8 0 26.7 21.5 14.1 34.1L269.7 378.3c-7.5 7.5-19.8 7.5-27.3 0L90.1 226.1c-12.6-12.6-3.7-34.1 14.1-34.1H192V24c0-13.3 10.7-24 24-24zm296 376v112c0 13.3-10.7 24-24 24H24c-13.3 0-24-10.7-24-24V376c0-13.3 10.7-24 24-24h146.7l49 49c20.1 20.1 52.5 20.1 72.6 0l49-49H488c13.3 0 24 10.7 24 24zm-124 88c0-11-9-20-20-20s-20 9-20 20 9 20 20 20 20-9 20-20zm64 0c0-11-9-20-20-20s-20 9-20 20 9 20 20 20 20-9 20-20z"/></svg></div>
<div class="tab" style="left:405.2px;color:#527ea6;letter-spacing:-.2px">Imports</div>
<div class="tabic" style="left:507px;top:176.100px;width:16.800px;height:16.800px"><svg viewBox="0 0 512 512" fill="#6c757d"><path d="M464 32H48C21.49 32 0 53.49 0 80v352c0 26.51 21.49 48 48 48h416c26.51 0 48-21.49 48-48V80c0-26.51-21.49-48-48-48zM224 416H64v-96h160v96zm0-160H64v-96h160v96zm224 160H288v-96h160v96zm0-160H288v-96h160v96z"/></svg></div>
<div class="tab" style="left:532.2px;letter-spacing:-.22px">Imports History</div>
<div class="tabic" style="left:699.800px;top:177px;width:17.500px;height:15px"><svg viewBox="0 0 35 30" fill="#6c757d"><rect x="0" y="1.200" width="5.600" height="6.200" rx="1.200"/><rect x="0" y="11.900" width="5.600" height="6.200" rx="1.200"/><rect x="0" y="22.800" width="5.600" height="6.200" rx="1.200"/><rect x="10.400" y="2.200" width="23.800" height="4.200" rx="1.600"/><rect x="10.400" y="12.900" width="23.800" height="4.200" rx="1.600"/><rect x="10.400" y="23.800" width="23.800" height="4.200" rx="1.600"/></svg></div>
<div class="tab" style="left:726px;letter-spacing:-.8px">Jobs</div>
<div id="card1"></div>
<div id="card2"></div>
<div id="steps"></div>
<div id="stline"></div>
<div class="stc" style="top:324.1px"><svg viewBox="0 0 24.600 24.600"><circle cx="12.300" cy="12.300" r="11.100" fill="#fff" stroke="#777" stroke-width="2.300"/><path d="M6.300 13.700L10.400 17.300L18.300 8.700" fill="none" stroke="#777" stroke-width="2.700" stroke-linejoin="miter"/></svg></div><div class="stt" style="left:468.8px;top:317.1px">Select the workspace</div><div class="sts" style="left:468.8px;top:341.2px">Transformation Plan</div>
<div class="stc" style="top:411.2px"><svg viewBox="0 0 24.600 24.600"><circle cx="12.300" cy="12.300" r="11.100" fill="#fff" stroke="#777" stroke-width="2.300"/><path d="M6.300 13.700L10.400 17.300L18.300 8.700" fill="none" stroke="#777" stroke-width="2.700" stroke-linejoin="miter"/></svg></div><div class="stt" style="left:470.2px;top:403.0px">Select the level</div><div class="sts" style="left:470.2px;top:427.0px">Project</div>
<div class="stc" style="top:497.0px"><svg viewBox="0 0 24.600 24.600"><circle cx="12.300" cy="12.300" r="11.100" fill="#fff" stroke="#777" stroke-width="2.300"/><path d="M6.300 13.700L10.400 17.300L18.300 8.700" fill="none" stroke="#777" stroke-width="2.700" stroke-linejoin="miter"/></svg></div><div class="stt" style="left:470.2px;top:489.9px">Select the type of import</div><div class="sts" style="left:470.2px;top:513.3px">Update scorecard</div>
<div class="stc" style="top:583.2px"><svg viewBox="0 0 24.600 24.600"><circle cx="12.300" cy="12.300" r="11.100" fill="#fff" stroke="#777" stroke-width="2.300"/><path d="M6.300 13.700L10.400 17.300L18.300 8.700" fill="none" stroke="#777" stroke-width="2.700" stroke-linejoin="miter"/></svg></div><div class="stt" style="left:470.2px;top:589.1px">Select scope</div>
<div class="stc" style="top:670.2px"><svg viewBox="0 0 24.600 24.600"><circle cx="12.300" cy="12.300" r="11.100" fill="#fff" stroke="#777" stroke-width="2.300"/><path d="M6.300 13.700L10.400 17.300L18.300 8.700" fill="none" stroke="#777" stroke-width="2.700" stroke-linejoin="miter"/></svg></div><div class="stt" style="left:470.2px;top:676.3px">Validate data quality for import</div>
<div class="stc" style="top:756.4px"><svg viewBox="0 0 24.600 24.600"><circle cx="12.300" cy="12.300" r="11.100" fill="#fff" stroke="#5181ab" stroke-width="2.300"/><path d="M6.300 13.700L10.400 17.300L18.300 8.700" fill="none" stroke="#5181ab" stroke-width="2.700" stroke-linejoin="miter"/></svg></div><div class="stt" style="left:467.5px;top:761.8px;color:#5181ab">Import Overview</div>
<div id="upl">Upload import file</div>
<svg id="drop" viewBox="0 0 1527 144.500"><rect x="1" y="1" width="1525" height="142.500" rx="6.500" fill="none" stroke="#6b8db1" stroke-width="1.700" stroke-dasharray="4.200 2.350"/></svg>
<div id="browse"><span class="t" style="left:12.7px;top:12.6px;font-size:17.5px;color:#fff;letter-spacing:.33px">Browse files</span></div>
<div id="alert"><svg class="ck" viewBox="0 0 28 20"><path d="M2.200 10.200L9.700 17.300L25.700 1.800" fill="none" stroke="#245a28" stroke-width="2.300" stroke-linecap="butt" stroke-linejoin="miter"/></svg><span class="b t">Success</span><span class="m t">Your file is valid. You can now execute your import</span><svg class="x" viewBox="0 0 14 14"><path d="M1.200 1.200L12.800 12.800M12.800 1.200L1.200 12.800" stroke="#245a28" stroke-width="2" stroke-linecap="round"/></svg></div>
<div class="bdg" id="valid20"><span class="t" style="left:9.2px;top:11.7px;font-size:14px;letter-spacing:.4px">20 Valid</span></div>
<div id="thead"></div>
<div class="th" style="left:891.8px;letter-spacing:0.17px">Line number</div>
<div class="th" style="left:1048.4px;letter-spacing:0.12px">Line name</div>
<div class="th" style="left:1412.9px;letter-spacing:0.13px">Column number</div>
<div class="th" style="left:1606px;letter-spacing:0.1px">Column id</div>
<div class="th" style="left:1737px;letter-spacing:0.17px">Column name</div>
<div class="th" style="left:1907.2px;letter-spacing:0.27px">Value</div>
<div class="th" style="left:1988.5px;letter-spacing:0.38px">Message</div>
<div class="th" style="left:2327.5px;letter-spacing:0.45px">Status</div>
<div class="row" style="top:760.7px"><span class="bb blue" style="left:8.500px;width:22.300px">2</span><span class="c" style="left:165px;letter-spacing:.32px">Asia-Pacific zone expansion plan</span><span class="bb blue" style="left:528.400px;width:22px">7</span><span class="c" style="left:721.500px">G</span><span class="c" style="left:851.500px;letter-spacing:-.2px">11/2018</span><span class="bb green" style="left:1022px;width:36.6px">110</span><span class="c" style="left:1104px;top:22.6px;font-size:17.800px;font-weight:700;letter-spacing:.25px">Updated</span><span class="c" style="left:1102.800px;top:48.4px;letter-spacing:.39px">Indicator value will be updated</span><span class="bb green" style="left:1442.500px;width:46.100px">valid</span></div>
<div class="row" style="top:847.0px"><span class="bb blue" style="left:8.500px;width:22.300px">3</span><span class="c" style="left:165px;letter-spacing:.32px">Asia-Pacific zone expansion plan</span><span class="bb blue" style="left:528.400px;width:22px">7</span><span class="c" style="left:721.500px">G</span><span class="c" style="left:851.500px;letter-spacing:-.2px">11/2018</span><span class="bb green" style="left:1022px;width:38.5px">149</span><span class="c" style="left:1104px;top:22.6px;font-size:17.800px;font-weight:700;letter-spacing:.25px">Updated</span><span class="c" style="left:1102.800px;top:48.4px;letter-spacing:.39px">Indicator value will be updated</span><span class="bb green" style="left:1442.500px;width:46.100px">valid</span></div>
<div class="row" style="top:933.3px"><span class="bb blue" style="left:8.500px;width:22.300px">4</span><span class="c" style="left:165px;letter-spacing:.32px">Asia-Pacific zone expansion plan</span><span class="bb blue" style="left:528.400px;width:22px">7</span><span class="c" style="left:721.500px">G</span><span class="c" style="left:851.500px;letter-spacing:-.2px">11/2018</span><span class="bb green" style="left:1022px;width:38.5px">102</span><span class="c" style="left:1104px;top:22.6px;font-size:17.800px;font-weight:700;letter-spacing:.25px">Updated</span><span class="c" style="left:1102.800px;top:48.4px;letter-spacing:.39px">Indicator value will be updated</span><span class="bb green" style="left:1442.500px;width:46.100px">valid</span></div>
<div class="row" style="top:1019.6px"><span class="bb blue" style="left:8.500px;width:22.300px">5</span><span class="c" style="left:165px;letter-spacing:.32px">Asia-Pacific zone expansion plan</span><span class="bb blue" style="left:528.400px;width:22px">7</span><span class="c" style="left:721.500px">G</span><span class="c" style="left:851.500px;letter-spacing:-.2px">11/2018</span><span class="bb green" style="left:1022px;width:38.5px">139</span><span class="c" style="left:1104px;top:22.6px;font-size:17.800px;font-weight:700;letter-spacing:.25px">Updated</span><span class="c" style="left:1102.800px;top:48.4px;letter-spacing:.39px">Indicator value will be updated</span><span class="bb green" style="left:1442.500px;width:46.100px">valid</span></div>
<div class="row" style="top:1105.9px"><span class="bb blue" style="left:8.500px;width:22.300px">6</span><span class="c" style="left:165px;letter-spacing:.32px">Asia-Pacific zone expansion plan</span><span class="bb blue" style="left:528.400px;width:22px">7</span><span class="c" style="left:721.500px">G</span><span class="c" style="left:851.500px;letter-spacing:-.2px">11/2018</span><span class="bb green" style="left:1022px;width:38.5px">131</span><span class="c" style="left:1104px;top:22.6px;font-size:17.800px;font-weight:700;letter-spacing:.25px">Updated</span><span class="c" style="left:1102.800px;top:48.4px;letter-spacing:.39px">Indicator value will be updated</span><span class="bb green" style="left:1442.500px;width:46.100px">valid</span></div>

<div id="pagline"></div>
<div class="pg" style="left:1401.300px;letter-spacing:.5px">1 of 4</div>

<svg class="pgi" style="left:1474.8px;width:13.5px" viewBox="0 0 13.5 10.5" fill="none" stroke="#c5cad0" stroke-width="1.9" stroke-linecap="round" stroke-linejoin="round"><path d="M5.50 1.1L1.10 5.25L5.50 9.4"/><path d="M12.40 1.1L8.00 5.25L12.40 9.4"/></svg><svg class="pgi" style="left:1523.7px;width:6.6px" viewBox="0 0 6.6 10.5" fill="none" stroke="#c5cad0" stroke-width="1.9" stroke-linecap="round" stroke-linejoin="round"><path d="M5.50 1.1L1.10 5.25L5.50 9.4"/></svg><svg class="pgi" style="left:1751.9px;width:6.6px" viewBox="0 0 6.6 10.5" fill="none" stroke="#6c757d" stroke-width="1.9" stroke-linecap="round" stroke-linejoin="round"><path d="M1.10 1.1L5.50 5.25L1.10 9.4"/></svg><svg class="pgi" style="left:1794.2px;width:13.5px" viewBox="0 0 13.5 10.5" fill="none" stroke="#6c757d" stroke-width="1.9" stroke-linecap="round" stroke-linejoin="round"><path d="M1.10 1.1L5.50 5.25L1.10 9.4"/><path d="M8.00 1.1L12.40 5.25L8.00 9.4"/></svg>
<div id="pg1"><span class="t" style="left:15.400px;top:13.1px;font-size:17.500px;color:#fff">1</span></div>
<div class="pg" style="left:1613px">2</div><div class="pg" style="left:1659px">3</div><div class="pg" style="left:1704.500px">4</div>

<div id="pgsel"><span>5</span><svg viewBox="0 0 16 10"><path d="M1.500 1.500L8 8L14.500 1.500" fill="none" stroke="#495057" stroke-width="1.800" stroke-linecap="round" stroke-linejoin="round"/></svg></div>
<div id="exec"><span class="t" style="left:14.800px;top:13.4px;font-size:17.500px;color:#fff">Execute</span></div>
<div id="foot"><b style="letter-spacing:.45px">© Propilot</b> - Version <i>4.0.0-rc.15</i></div>
<div id="botshade"></div>
<div id="botline"></div>
</div>
</body>
</html>
